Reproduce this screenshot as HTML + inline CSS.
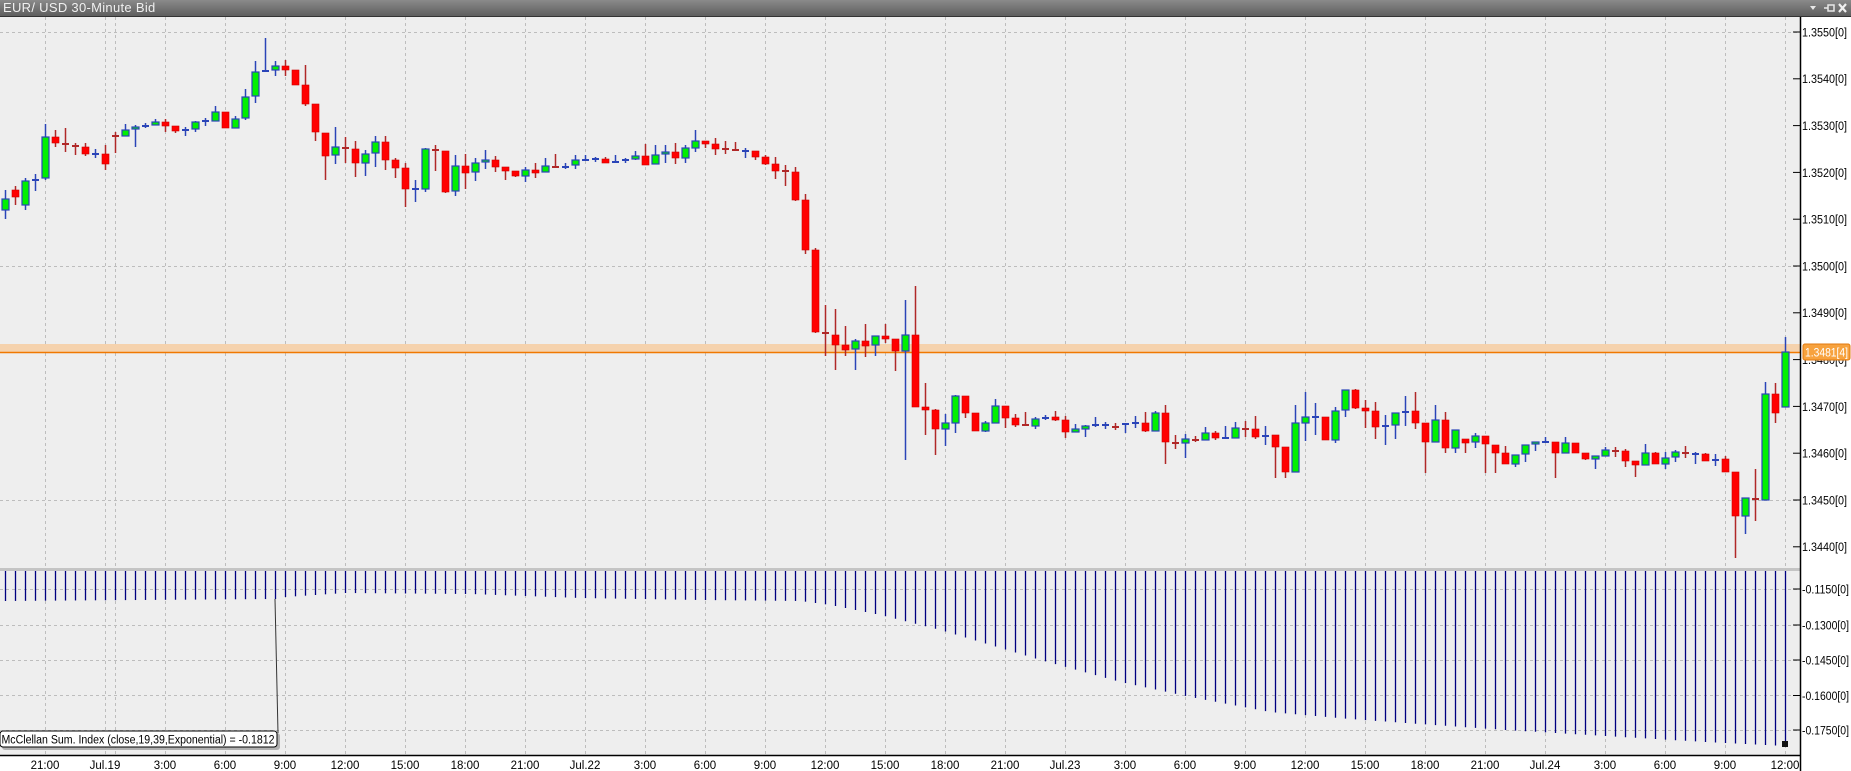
<!DOCTYPE html>
<html><head><meta charset="utf-8">
<style>
html,body{margin:0;padding:0;background:#fff;}
body{width:1851px;height:771px;overflow:hidden;position:relative;font-family:"Liberation Sans",sans-serif;}
#title{position:absolute;left:0;top:0;width:1851px;height:16px;background:linear-gradient(#8a8a8a,#5e5e5e);border-bottom:1px solid #333;color:#f0f0f0;font-size:13px;line-height:16px;}
#title span{position:absolute;left:3px;top:0;letter-spacing:0.3px;}
svg{position:absolute;left:0;top:0;}
.ax text{font-size:11.5px;fill:#000;}
.tm{font-size:11.5px;fill:#000;text-anchor:middle;}
</style></head><body>
<svg id="s" width="1851" height="771" xmlns="http://www.w3.org/2000/svg">
<rect x="0" y="17" width="1800" height="551" fill="#eeeeee"/>
<rect x="0" y="571" width="1800" height="184" fill="#eeeeee"/>
<rect x="0" y="568" width="1800" height="3" fill="#c4c4c4"/>
<rect x="1801" y="17" width="50" height="754" fill="#fff"/>
<g id="grid" stroke="#bdbdbd" stroke-width="1" stroke-dasharray="3,3"></g>
<rect x="0" y="344" width="1800" height="8" fill="#f5d2ad"/>
<line x1="0" y1="352.5" x2="1800" y2="352.5" stroke="#f07800" stroke-width="1.5"/>
<g id="ind"></g>
<g id="cd"></g>
<line x1="275" y1="599" x2="278" y2="733" stroke="#333" stroke-width="1"/>
<rect x="2" y="733" width="278" height="17" rx="3" fill="#888" opacity="0.6"/>
<rect x="0" y="731" width="277" height="16" rx="3" fill="#fff" stroke="#000" stroke-width="1"/>
<text x="1.5" y="743.5" font-size="11.5" fill="#000" textLength="273" lengthAdjust="spacingAndGlyphs">McClellan Sum. Index (close,19,39,Exponential) = -0.1812</text>
<rect x="1782" y="741" width="6" height="6" fill="#111"/>
<line x1="1800.5" y1="17" x2="1800.5" y2="771" stroke="#000" stroke-width="1.5"/>
<line x1="0" y1="755.5" x2="1800" y2="755.5" stroke="#000" stroke-width="1.5"/>
<g id="ticks" stroke="#000" stroke-width="1"></g>
<g class="ax">
<text x="1802" y="36.5" textLength="45" lengthAdjust="spacingAndGlyphs">1.3550[0]</text>
<text x="1802" y="83" textLength="45" lengthAdjust="spacingAndGlyphs">1.3540[0]</text>
<text x="1802" y="130" textLength="45" lengthAdjust="spacingAndGlyphs">1.3530[0]</text>
<text x="1802" y="177" textLength="45" lengthAdjust="spacingAndGlyphs">1.3520[0]</text>
<text x="1802" y="223.5" textLength="45" lengthAdjust="spacingAndGlyphs">1.3510[0]</text>
<text x="1802" y="270.5" textLength="45" lengthAdjust="spacingAndGlyphs">1.3500[0]</text>
<text x="1802" y="317" textLength="45" lengthAdjust="spacingAndGlyphs">1.3490[0]</text>
<text x="1802" y="364" textLength="45" lengthAdjust="spacingAndGlyphs">1.3480[0]</text>
<text x="1802" y="411" textLength="45" lengthAdjust="spacingAndGlyphs">1.3470[0]</text>
<text x="1802" y="457.5" textLength="45" lengthAdjust="spacingAndGlyphs">1.3460[0]</text>
<text x="1802" y="504.5" textLength="45" lengthAdjust="spacingAndGlyphs">1.3450[0]</text>
<text x="1802" y="551" textLength="45" lengthAdjust="spacingAndGlyphs">1.3440[0]</text>
<text x="1802" y="593.5" textLength="47" lengthAdjust="spacingAndGlyphs">-0.1150[0]</text>
<text x="1802" y="629.5" textLength="47" lengthAdjust="spacingAndGlyphs">-0.1300[0]</text>
<text x="1802" y="664.5" textLength="47" lengthAdjust="spacingAndGlyphs">-0.1450[0]</text>
<text x="1802" y="700" textLength="47" lengthAdjust="spacingAndGlyphs">-0.1600[0]</text>
<text x="1802" y="734.5" textLength="47" lengthAdjust="spacingAndGlyphs">-0.1750[0]</text>
</g>
<rect x="1803" y="344" width="47" height="16" rx="2" fill="#f7a23e" stroke="#e07a10" stroke-width="1"/>
<text x="1805" y="356.5" font-size="11.5" fill="#fff" textLength="43" lengthAdjust="spacingAndGlyphs">1.3481[4]</text>
<g class="tm">
<text x="45" y="769">21:00</text><text x="105" y="769">Jul.19</text><text x="165" y="769">3:00</text>
<text x="225" y="769">6:00</text><text x="285" y="769">9:00</text><text x="345" y="769">12:00</text>
<text x="405" y="769">15:00</text><text x="465" y="769">18:00</text><text x="525" y="769">21:00</text>
<text x="585" y="769">Jul.22</text><text x="645" y="769">3:00</text><text x="705" y="769">6:00</text>
<text x="765" y="769">9:00</text><text x="825" y="769">12:00</text><text x="885" y="769">15:00</text>
<text x="945" y="769">18:00</text><text x="1005" y="769">21:00</text><text x="1065" y="769">Jul.23</text>
<text x="1125" y="769">3:00</text><text x="1185" y="769">6:00</text><text x="1245" y="769">9:00</text>
<text x="1305" y="769">12:00</text><text x="1365" y="769">15:00</text><text x="1425" y="769">18:00</text>
<text x="1485" y="769">21:00</text><text x="1545" y="769">Jul.24</text><text x="1605" y="769">3:00</text>
<text x="1665" y="769">6:00</text><text x="1725" y="769">9:00</text><text x="1785" y="769">12:00</text>
</g>
</svg>
<div id="title"><span>EUR/ USD 30-Minute Bid</span>
<svg width="60" height="16" style="left:1795px;top:0" xmlns="http://www.w3.org/2000/svg">
<path d="M15 6 L21 6 L18 10 Z" fill="#e8e8e8"/>
<path d="M29 8 L33 8 M33 5 L33 11 L39 11 L39 5 Z" stroke="#e8e8e8" stroke-width="1.5" fill="none"/>
<path d="M44 4 L51 12 M51 4 L44 12" stroke="#f0f0f0" stroke-width="2.2"/>
</svg></div>
<script>
var NS="http://www.w3.org/2000/svg";
function el(p,t,a){var e=document.createElementNS(NS,t);for(var k in a)e.setAttribute(k,a[k]);p.appendChild(e);return e;}
var g=document.getElementById('grid');
var vx=[115];for(var x=45;x<=1785;x+=60)vx.push(x);
vx.forEach(function(x){el(g,'line',{x1:x+.5,y1:17,x2:x+.5,y2:568});el(g,'line',{x1:x+.5,y1:571,x2:x+.5,y2:755});});
[32,266,500].forEach(function(y){el(g,'line',{x1:0,y1:y+.5,x2:1800,y2:y+.5});});
[589,625,660,695,730].forEach(function(y){el(g,'line',{x1:0,y1:y+.5,x2:1800,y2:y+.5});});
var tk=document.getElementById('ticks');
[32,78.8,125.6,172.4,219.2,266,312.8,359.6,406.4,453.2,500,546.8,589,625,660,695.5,730].forEach(function(y){el(tk,'line',{x1:1793,y1:y,x2:1800,y2:y});});
var pts=[[5,601],[275,599],[285,597],[345,593],[470,594],[580,598],[700,600],[800,601],[830,605],[880,615],[940,630],[1040,660],[1120,682],[1190,697],[1270,712],[1350,719],[1405,723],[1505,730],[1605,736],[1705,742],[1785,746]];
function iy(x){for(var i=0;i<pts.length-1;i++){if(x<=pts[i+1][0]){var a=pts[i],b=pts[i+1];return a[1]+(b[1]-a[1])*(x-a[0])/(b[0]-a[0]);}}return 746;}
var ind=document.getElementById('ind');
for(var i=0;i<=178;i++){var x=5+10*i;el(ind,'line',{x1:x+.5,y1:571,x2:x+.5,y2:iy(x),stroke:'#000080','stroke-width':1.3});}
var D=[
['g',190,199,210,219],['r',186,190,197,205],['g',178,181,205,210],['b',174,180,180,191],['g',124,137,178,180],
['r',130,137,143,147],['d',128,144,144,152],['d',143,146,146,155],['r',143,147,154,156],['b',149,154,154,158],
['r',145,154,164,170],['d',132,136,136,153],['g',124,130,136,136],['g',125,127,129,147],['b',123,126,126,128],
['g',119,122,125,125],['r',119,122,126,132],['r',126,126,131,133],['b',127,130,130,136],['g',121,122,129,132],
['b',118,121,121,126],['g',106,112,121,121],['r',112,112,128,128],['g',116,119,128,128],['g',89,97,118,120],
['g',61,72,96,103],['b',38,71,71,72],['g',61,66,70,76],['r',60,66,70,76],['r',70,70,85,85],
['r',65,85,104,106],['r',104,104,132,141],['r',133,133,156,180],['g',127,147,155,164],['d',137,148,148,163],
['r',141,149,163,177],['g',150,154,163,176],['g',136,142,153,167],['r',136,142,160,170],['r',158,160,168,178],
['r',163,168,189,207],['b',180,189,189,202],['g',148,149,189,192],['d',145,150,150,171],['r',151,151,192,193],
['g',155,166,191,196],['r',154,166,173,189],['g',158,163,172,181],['g',150,160,162,169],['r',156,160,167,172],
['r',167,167,171,180],['r',171,171,176,177],['g',167,170,176,182],['r',163,170,173,178],['g',158,166,172,172],
['d',154,167,167,168],['b',163,167,167,169],['g',155,160,165,169],['b',155,160,160,161],['b',157,159,159,162],
['r',157,159,163,163],['b',155,162,162,163],['b',158,160,160,163],['g',151,156,159,160],['r',144,156,165,165],
['g',145,155,164,164],['g',145,152,154,163],['r',143,152,158,164],['g',145,148,158,163],['g',130,141,148,152],
['r',141,141,144,148],['r',138,144,149,155],['d',141,149,149,154],['d',142,150,150,151],['b',148,151,151,158],
['r',151,151,157,160],['r',155,157,164,165],['r',157,164,171,179],['d',165,171,171,186],['r',167,172,200,201],
['r',194,200,250,254],['r',248,250,332,333],['d',305,333,333,356],['r',309,335,345,370],['r',326,345,350,356],
['g',339,341,349,370],['r',324,341,346,357],['g',336,336,345,356],['r',324,336,339,343],['r',339,339,351,371],
['g',300,335,351,460],['r',286,335,407,407],['r',383,407,410,435],['r',409,410,429,455],['g',414,423,429,446],
['g',395,396,423,433],['r',396,396,413,418],['r',413,413,431,431],['g',421,423,431,432],['g',399,406,423,423],
['r',406,406,418,428],['r',414,418,425,427],['d',412,425,425,425],['g',417,419,426,429],['b',415,418,418,420],
['r',411,417,420,421],['r',416,420,432,438],['g',424,429,432,432],['g',425,426,429,437],['b',417,425,425,427],
['b',422,425,425,429],['d',423,427,427,430],['b',424,424,424,433],['b',416,423,423,428],['r',412,423,431,432],
['g',411,413,431,431],['r',405,413,442,464],['d',435,443,443,449],['g',434,439,443,458],['d',436,440,440,442],
['g',427,433,440,440],['r',431,433,438,440],['b',426,438,438,438],['g',422,428,438,438],['d',421,429,429,437],
['r',416,429,437,439],['b',426,436,436,445],['r',435,435,447,478],['r',447,447,472,478],['g',405,423,472,472],
['g',392,417,423,441],['b',403,417,417,435],['r',417,417,440,440],['g',407,411,440,443],['g',390,390,410,417],
['r',389,390,408,409],['r',400,408,411,428],['r',402,411,427,439],['b',415,426,426,445],['g',413,413,425,439],
['b',396,412,412,426],['r',392,411,423,429],['r',423,423,442,473],['g',405,420,442,442],['r',412,420,448,453],
['g',430,430,448,453],['r',439,439,443,453],['g',433,436,442,448],['r',436,436,444,473],['r',445,445,453,473],
['r',446,453,464,464],['g',455,455,464,467],['g',445,445,454,462],['g',442,442,444,451],['b',437,442,442,443],
['r',442,442,453,478],['g',437,443,453,453],['r',443,443,453,453],['r',453,453,459,460],['g',456,456,459,469],
['g',447,450,456,456],['d',447,451,451,457],['r',449,451,461,467],['r',461,461,465,477],['g',444,453,465,465],
['r',452,453,464,464],['g',452,458,464,469],['g',450,452,457,462],['d',446,453,453,458],['b',452,454,454,464],
['r',453,454,461,461],['b',454,460,460,466],['r',456,459,472,472],['r',472,472,516,558],['g',498,498,516,534],
['d',469,499,499,521],['g',382,394,500,500],['r',383,394,413,423],['g',337,352,407,407]
];
var cd=document.getElementById('cd');
D.forEach(function(c,i){
 var x=5+10*i,t=c[0];
 var wc=(t=='g'||t=='b')?'#2a44b8':'#b02828';
 el(cd,'line',{x1:x+.5,y1:c[1],x2:x+.5,y2:c[4],stroke:wc,'stroke-width':1.5});
 if(t=='g'){el(cd,'rect',{x:x-3,y:c[2],width:7,height:Math.max(2,c[3]-c[2]),fill:'#00f000',stroke:'#2a44b8','stroke-width':1.2});}
 else if(t=='r'){el(cd,'rect',{x:x-3,y:c[2],width:7,height:Math.max(2,c[3]-c[2]),fill:'#ff0000',stroke:'#d00000','stroke-width':0.6});}
 else {el(cd,'rect',{x:x-3,y:c[2]-1,width:7,height:2,fill:wc});}
});
</script>
</body></html>
